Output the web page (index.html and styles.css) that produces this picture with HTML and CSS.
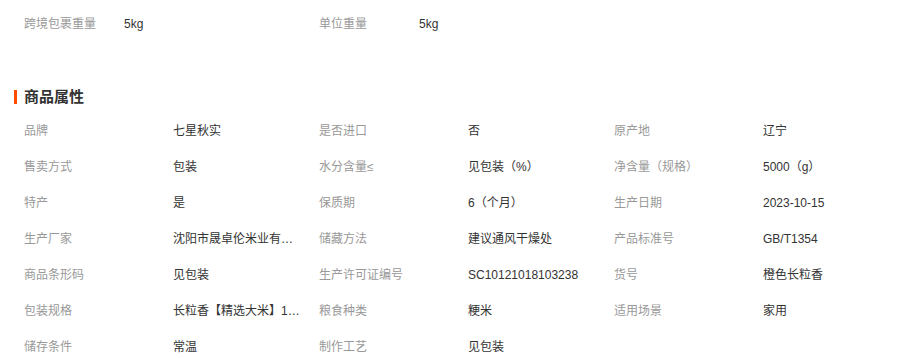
FILE: index.html
```html
<!DOCTYPE html>
<html lang="zh-CN">
<head>
<meta charset="utf-8">
<title>商品属性</title>
<link rel="stylesheet" href="styles.css">
</head>
<body>
<div class="page">
  <div class="top-row">
    <div class="top-item"><span class="top-label">跨境包裹重量</span><span class="top-value">5kg</span></div>
    <div class="top-item"><span class="top-label">单位重量</span><span class="top-value">5kg</span></div>
  </div>

  <h2 class="section-title"><span class="bar"></span>商品属性</h2>

  <div class="attrs">
    <div class="label">品牌</div><div class="value">七星秋实</div>
    <div class="label">是否进口</div><div class="value">否</div>
    <div class="label">原产地</div><div class="value">辽宁</div>

    <div class="label">售卖方式</div><div class="value">包装</div>
    <div class="label">水分含量≤</div><div class="value">见包装（%）</div>
    <div class="label">净含量（规格）</div><div class="value">5000（g）</div>

    <div class="label">特产</div><div class="value">是</div>
    <div class="label">保质期</div><div class="value">6（个月）</div>
    <div class="label">生产日期</div><div class="value">2023-10-15</div>

    <div class="label">生产厂家</div><div class="value">沈阳市晟卓伦米业有限公司</div>
    <div class="label">储藏方法</div><div class="value">建议通风干燥处</div>
    <div class="label">产品标准号</div><div class="value">GB/T1354</div>

    <div class="label">商品条形码</div><div class="value">见包装</div>
    <div class="label">生产许可证编号</div><div class="value">SC10121018103238</div>
    <div class="label">货号</div><div class="value">橙色长粒香</div>

    <div class="label">包装规格</div><div class="value">长粒香【精选大米】10斤装</div>
    <div class="label">粮食种类</div><div class="value">粳米</div>
    <div class="label">适用场景</div><div class="value">家用</div>

    <div class="label">储存条件</div><div class="value">常温</div>
    <div class="label">制作工艺</div><div class="value">见包装</div>
  </div>
</div>
</body>
</html>
```

FILE: styles.css
```css
html, body {
  margin: 0;
  padding: 0;
  background: #fff;
}

body {
  font-family: "Liberation Sans", "Noto Sans CJK SC", sans-serif;
  font-size: 12px;
  color: #333;
  text-spacing-trim: space-all;
}

.page {
  padding-top: 6px;
}

.top-row {
  display: flex;
  padding-left: 24px;
  height: 36px;
  line-height: 36px;
}

.top-item {
  display: flex;
  width: 295px;
}

.top-label {
  width: 100px;
  color: #999;
}

.top-value {
  color: #333;
}

.section-title {
  display: flex;
  align-items: center;
  margin: 45px 0 6px 0;
  padding-left: 14px;
  height: 20px;
  line-height: 20px;
  font-size: 15px;
  font-weight: bold;
  color: #333;
}

.bar {
  width: 3px;
  height: 14px;
  background: #ff4a00;
  margin-right: 7px;
}

.attrs {
  display: grid;
  grid-template-columns: repeat(3, 149px 146px);
  grid-auto-rows: 36px;
  padding-left: 24px;
  line-height: 36px;
}

.label {
  color: #999;
  white-space: nowrap;
}

.value {
  color: #333;
  max-width: 128px;
  white-space: nowrap;
  overflow: hidden;
  text-overflow: ellipsis;
}
```
